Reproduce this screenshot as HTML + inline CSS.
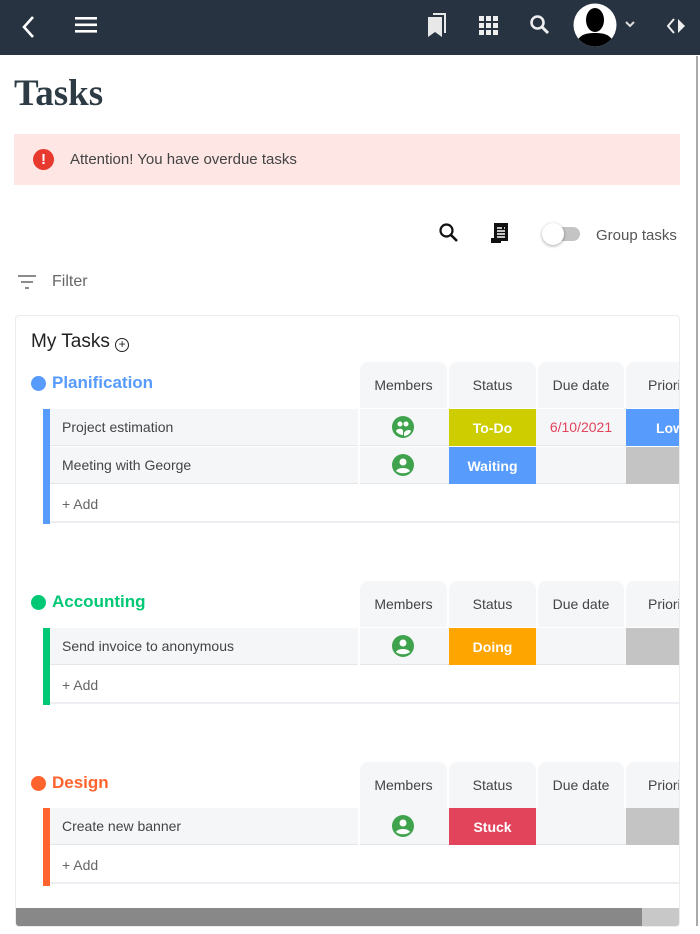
<!DOCTYPE html>
<html><head><meta charset="utf-8"><style>
*{margin:0;padding:0;box-sizing:border-box}
body{width:700px;height:934px;background:#fff;position:relative;overflow:hidden;font-family:"Liberation Sans",sans-serif;color:#333}
.a{position:absolute}
.nav{left:0;top:0;width:700px;height:55px;background:#283341}
.hc{background:#f5f6f8;border-radius:8px 8px 0 0;height:46px;font-size:14px;color:#444;display:flex;align-items:center;justify-content:center;white-space:nowrap;overflow:hidden}
.row{background:#f5f6f8;height:37px;border-bottom:1px solid #e4e6ea}
.tn{font-size:14px;color:#444;line-height:37px}
.st{color:#fff;font-weight:bold;font-size:14px;display:flex;align-items:center;justify-content:center;height:37px}
.add{height:38px;border-bottom:2px solid #eceef1;font-size:14px;color:#666;line-height:38px;padding-left:12px;background:#fff}
.gt{font-size:17px;font-weight:bold;display:flex;align-items:center;gap:6px}
.dot{width:15px;height:15px;border-radius:50%}
</style></head><body>
<div class="a nav"></div>
<svg class="a" style="left:18px;top:14px" width="20" height="26" viewBox="0 0 20 26"><path d="M15 3 L6 13 L15 23" stroke="#fff" stroke-width="2.6" fill="none"/></svg>
<svg class="a" style="left:75px;top:16px" width="22" height="18"><rect y="1" width="22" height="2.6" fill="#fff"/><rect y="7.5" width="22" height="2.6" fill="#fff"/><rect y="14" width="22" height="2.6" fill="#fff"/></svg>
<svg class="a" style="left:426px;top:11px" width="24" height="28" viewBox="0 0 24 28"><path d="M7 2h13v20h-2V4H7z" fill="#e8e8e8"/><path d="M2 6h14v20l-7-5-7 5z" fill="#e8e8e8"/></svg>
<svg class="a" style="left:479px;top:16px" width="20" height="20"><g fill="#eee"><rect x="0" y="0" width="5" height="5"/><rect x="7" y="0" width="5" height="5"/><rect x="14" y="0" width="5" height="5"/><rect x="0" y="7" width="5" height="5"/><rect x="7" y="7" width="5" height="5"/><rect x="14" y="7" width="5" height="5"/><rect x="0" y="14" width="5" height="5"/><rect x="7" y="14" width="5" height="5"/><rect x="14" y="14" width="5" height="5"/></g></svg>
<svg class="a" style="left:529px;top:14px" width="22" height="22"><circle cx="8.5" cy="8.5" r="6" stroke="#eee" stroke-width="2.6" fill="none"/><path d="M13 13l6 6" stroke="#eee" stroke-width="3"/></svg>
<svg class="a" style="left:573px;top:3px" width="46" height="44" viewBox="0 0 46 44"><clipPath id="c"><ellipse cx="22" cy="22" rx="21.5" ry="21.5"/></clipPath><ellipse cx="22" cy="22" rx="21.5" ry="21.5" fill="#fff"/><g clip-path="url(#c)" fill="#000"><ellipse cx="22" cy="17" rx="9" ry="12"/><path d="M3 44 C4 32 12 30 22 30 C32 30 40 32 41 44z"/></g></svg>
<svg class="a" style="left:624px;top:20px" width="12" height="10"><path d="M2 2l4 4 4-4" stroke="#ddd" stroke-width="2" fill="none"/></svg>
<svg class="a" style="left:667px;top:17px" width="20" height="18"><path d="M7 2L1 9l6 7" stroke="#eee" stroke-width="2" fill="none"/><path d="M11 2l7 7-7 7z" fill="#eee"/></svg>
<div class="a" style="left:696px;top:56px;width:2px;height:870px;background:#aaa"></div>

<div class="a" style="left:14px;top:72px;font-family:'Liberation Serif',serif;font-weight:bold;font-size:37px;color:#2d3b45">Tasks</div>

<div class="a" style="left:14px;top:134px;width:666px;height:51px;background:#fde6e3"></div>
<div class="a" style="left:33px;top:149px;width:21px;height:21px;border-radius:50%;background:#e8392f;color:#fff;font-weight:bold;font-size:15px;text-align:center;line-height:21px">!</div>
<div class="a" style="left:70px;top:151px;font-size:15px;color:#444">Attention! You have overdue tasks</div>

<svg class="a" style="left:438px;top:222px" width="22" height="22"><circle cx="8.5" cy="8.5" r="6" stroke="#111" stroke-width="2.2" fill="none"/><path d="M13 13l6 6" stroke="#111" stroke-width="2.6"/></svg>
<svg class="a" style="left:489px;top:221px" width="24" height="24"><rect x="5" y="2" width="14" height="18" fill="#111"/><g stroke="#fff" stroke-width="1.4"><path d="M8 7h5M8 10h8M8 13h8M8 16h8M15 7h1"/></g><rect x="2" y="17" width="10" height="5" fill="#111"/></svg>
<div class="a" style="left:545px;top:227px;width:35px;height:14px;border-radius:7px;background:#c4c4c4"></div>
<div class="a" style="left:542px;top:223px;width:22px;height:22px;border-radius:50%;background:#fff;box-shadow:0 1px 3px rgba(0,0,0,.35)"></div>
<div class="a" style="left:596px;top:227px;font-size:15px;color:#555">Group tasks</div>

<svg class="a" style="left:17px;top:274px" width="20" height="16"><g stroke="#666" stroke-width="1.6"><path d="M1 2h18M4 8h12M8 14h4"/></g></svg>
<div class="a" style="left:52px;top:273px;font-size:16px;color:#666">Filter</div>

<div class="a" style="left:15px;top:315px;width:665px;height:612px;border:1px solid #ececec;border-radius:4px;overflow:hidden;background:#fff">
 <div class="a" style="left:15px;top:15px;font-size:19px;color:#222">My Tasks <span style="display:inline-block;width:14px;height:14px;border:1.4px solid #222;border-radius:50%;font-size:12px;line-height:11px;text-align:center;vertical-align:-1px">+</span></div>

 <div class="a gt" style="left:15px;top:57px;color:#579bfc"><div class="dot" style="background:#579bfc"></div>Planification</div>
 <div class="a hc" style="left:344px;top:46px;width:87px">Members</div>
 <div class="a hc" style="left:433px;top:46px;width:87px">Status</div>
 <div class="a hc" style="left:522px;top:46px;width:86px">Due date</div>
 <div class="a hc" style="left:610px;top:46px;width:80px;justify-content:flex-start;padding-left:22px">Priority</div>
 <div class="a" style="left:27px;top:93px;width:7px;height:115px;background:#579bfc"></div>
 <div class="a row" style="left:34px;top:93px;width:640px"></div>
 <div class="a row" style="left:34px;top:131px;width:640px"></div>
 <div class="a" style="left:342px;top:93px;width:2px;height:76px;background:#fff"></div>
 <div class="a tn" style="left:46px;top:93px">Project estimation</div>
 <div class="a tn" style="left:46px;top:131px">Meeting with George</div>
 <svg class="a" style="left:376px;top:100px" width="22" height="22"><circle cx="11" cy="11" r="11" fill="#3fa34d"/><circle cx="8" cy="8" r="2.5" fill="#fff"/><circle cx="14" cy="8" r="2.5" fill="#fff"/><path d="M4 15c1-3 7-3 7 0v4c-3 0-6-2-7-4zM12 17c1-3 6-4 7-2-1 3-4 5-7 5z" fill="#fff"/></svg>
 <svg class="a" style="left:376px;top:138px" width="22" height="22"><circle cx="11" cy="11" r="11" fill="#3fa34d"/><circle cx="11" cy="8" r="3.5" fill="#fff"/><path d="M4 17c2-4 12-4 14 0-4 3-10 3-14 0z" fill="#fff"/></svg>
 <div class="a st" style="left:433px;top:93px;width:87px;background:#cdcd00">To-Do</div>
 <div class="a st" style="left:433px;top:131px;width:87px;background:#579bfc">Waiting</div>
 <div class="a" style="left:522px;top:93px;width:86px;line-height:37px;text-align:center;font-size:14px;color:#e2445c">6/10/2021</div>
 <div class="a st" style="left:610px;top:93px;width:60px;background:#579bfc;justify-content:flex-start;padding-left:30px">Low</div>
 <div class="a" style="left:610px;top:131px;width:60px;height:37px;background:#c4c4c4"></div>
 <div class="a add" style="left:34px;top:169px;width:640px">+ Add</div>

 <div class="a gt" style="left:15px;top:276px;color:#00c875"><div class="dot" style="background:#00c875"></div>Accounting</div>
 <div class="a hc" style="left:344px;top:265px;width:87px">Members</div>
 <div class="a hc" style="left:433px;top:265px;width:87px">Status</div>
 <div class="a hc" style="left:522px;top:265px;width:86px">Due date</div>
 <div class="a hc" style="left:610px;top:265px;width:80px;justify-content:flex-start;padding-left:22px">Priority</div>
 <div class="a" style="left:27px;top:312px;width:7px;height:77px;background:#00c875"></div>
 <div class="a row" style="left:34px;top:312px;width:640px"></div>
 <div class="a" style="left:342px;top:312px;width:2px;height:37px;background:#fff"></div>
 <div class="a tn" style="left:46px;top:312px">Send invoice to anonymous</div>
 <svg class="a" style="left:376px;top:319px" width="22" height="22"><circle cx="11" cy="11" r="11" fill="#3fa34d"/><circle cx="11" cy="8" r="3.5" fill="#fff"/><path d="M4 17c2-4 12-4 14 0-4 3-10 3-14 0z" fill="#fff"/></svg>
 <div class="a st" style="left:433px;top:312px;width:87px;background:#ffa500">Doing</div>
 <div class="a" style="left:610px;top:312px;width:60px;height:37px;background:#c4c4c4"></div>
 <div class="a add" style="left:34px;top:350px;width:640px">+ Add</div>

 <div class="a gt" style="left:15px;top:457px;color:#ff642e"><div class="dot" style="background:#ff642e"></div>Design</div>
 <div class="a hc" style="left:344px;top:446px;width:87px">Members</div>
 <div class="a hc" style="left:433px;top:446px;width:87px">Status</div>
 <div class="a hc" style="left:522px;top:446px;width:86px">Due date</div>
 <div class="a hc" style="left:610px;top:446px;width:80px;justify-content:flex-start;padding-left:22px">Priority</div>
 <div class="a" style="left:27px;top:492px;width:7px;height:78px;background:#ff642e"></div>
 <div class="a row" style="left:34px;top:492px;width:640px"></div>
 <div class="a" style="left:342px;top:492px;width:2px;height:37px;background:#fff"></div>
 <div class="a tn" style="left:46px;top:492px">Create new banner</div>
 <svg class="a" style="left:376px;top:499px" width="22" height="22"><circle cx="11" cy="11" r="11" fill="#3fa34d"/><circle cx="11" cy="8" r="3.5" fill="#fff"/><path d="M4 17c2-4 12-4 14 0-4 3-10 3-14 0z" fill="#fff"/></svg>
 <div class="a st" style="left:433px;top:492px;width:87px;background:#e2445c">Stuck</div>
 <div class="a" style="left:610px;top:492px;width:60px;height:37px;background:#c4c4c4"></div>
 <div class="a add" style="left:34px;top:530px;width:640px">+ Add</div>

 <div class="a" style="left:0;top:592px;width:665px;height:18px;background:#c8c8c8"></div>
 <div class="a" style="left:0;top:592px;width:626px;height:18px;background:#888"></div>
</div>
</body></html>
